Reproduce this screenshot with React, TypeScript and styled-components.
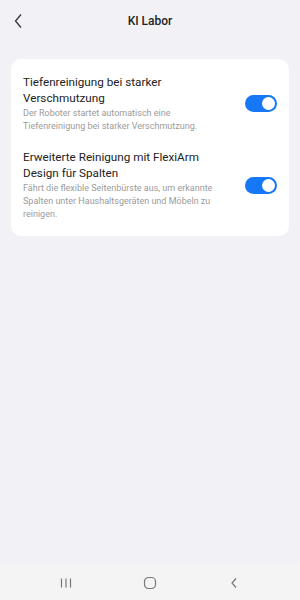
import React, { useState } from "react";
import styled, { createGlobalStyle } from "styled-components";

const Global = createGlobalStyle`
  html, body { margin: 0; padding: 0; }
  body {
    background: #f2f1f6;
    font-family: Roboto, "Noto Sans", "Liberation Sans", sans-serif;
    -webkit-font-smoothing: antialiased;
  }
`;

const Screen = styled.div`
  width: 300px;
  height: 600px;
  display: flex;
  flex-direction: column;
  background: #f2f1f6;
  overflow: hidden;
`;

const Header = styled.header`
  height: 42px;
  display: grid;
  grid-template-columns: 40px 1fr 40px;
  align-items: center;
`;

const BackButton = styled.button`
  border: none;
  background: none;
  padding: 0 0 0 13px;
  display: flex;
  align-items: center;
  height: 42px;
  cursor: pointer;
`;

const Title = styled.h1`
  margin: 0;
  text-align: center;
  font-size: 12px;
  font-weight: 500;
  color: #1f1f1f;
`;

const Content = styled.main`
  flex: 1;
  padding: 17px 11px 0;
`;

const Card = styled.section`
  background: #ffffff;
  border-radius: 10px;
  padding: 15px 12px 15px;
  display: flex;
  flex-direction: column;
  gap: 16px;
`;

const Row = styled.div`
  display: flex;
  align-items: center;
  gap: 20px;
`;

const TextCol = styled.div`
  flex: 1;
  min-width: 0;
`;

const RowTitle = styled.div`
  font-size: 11.7px;
  line-height: 16px;
  color: #222222;
`;

const RowDesc = styled.div`
  margin-top: 1px;
  font-size: 9px;
  line-height: 13px;
  color: #9b9b9b;
`;

const Track = styled.button<{ $on: boolean }>`
  flex: none;
  width: 32px;
  height: 17px;
  border-radius: 9px;
  border: none;
  padding: 0;
  background: ${(p) => (p.$on ? "#1677f7" : "#d6d6d6")};
  position: relative;
  cursor: pointer;
`;

const Knob = styled.span<{ $on: boolean }>`
  position: absolute;
  top: 2px;
  left: ${(p) => (p.$on ? "17px" : "2px")};
  width: 13px;
  height: 13px;
  border-radius: 50%;
  background: #ffffff;
`;

const NavBar = styled.nav`
  height: 35px;
  background: #f4f4f5;
  display: flex;
  align-items: center;
  justify-content: center;
  gap: 70px;
`;

const NavIcon = styled.span`
  width: 14px;
  display: flex;
  align-items: center;
  justify-content: center;
`;

function Toggle({ initial }: { initial: boolean }) {
  const [on, setOn] = useState(initial);
  return (
    <Track $on={on} onClick={() => setOn(!on)} aria-pressed={on}>
      <Knob $on={on} />
    </Track>
  );
}

const items = [
  {
    title: "Tiefenreinigung bei starker Verschmutzung",
    desc: "Der Roboter startet automatisch eine Tiefenreinigung bei starker Verschmutzung.",
  },
  {
    title: "Erweiterte Reinigung mit FlexiArm Design für Spalten",
    desc: "Fährt die flexible Seitenbürste aus, um erkannte Spalten unter Haushaltsgeräten und Möbeln zu reinigen.",
  },
];

export default function App() {
  return (
    <>
      <Global />
      <Screen>
        <Header>
          <BackButton aria-label="Zurück">
            <svg width="10" height="16" viewBox="0 0 10 16">
              <path d="M8 1.5 L2.5 8 L8 14.5" fill="none" stroke="#333" strokeWidth="1.3" />
            </svg>
          </BackButton>
          <Title>KI Labor</Title>
          <span />
        </Header>
        <Content>
          <Card>
            {items.map((it) => (
              <Row key={it.title}>
                <TextCol>
                  <RowTitle>{it.title}</RowTitle>
                  <RowDesc>{it.desc}</RowDesc>
                </TextCol>
                <Toggle initial={true} />
              </Row>
            ))}
          </Card>
        </Content>
        <NavBar>
          <NavIcon>
            <svg width="14" height="12" viewBox="0 0 14 12">
              <path d="M2.5 1.5V10.5M7 1.5V10.5M11.5 1.5V10.5" stroke="#777" strokeWidth="1.2" />
            </svg>
          </NavIcon>
          <NavIcon>
            <svg width="14" height="14" viewBox="0 0 14 14">
              <rect x="1.5" y="1.5" width="11" height="11" rx="4" fill="none" stroke="#777" strokeWidth="1.2" />
            </svg>
          </NavIcon>
          <NavIcon>
            <svg width="10" height="12" viewBox="0 0 10 12">
              <path d="M7 1.5 L3 6 L7 10.5" fill="none" stroke="#777" strokeWidth="1.2" />
            </svg>
          </NavIcon>
        </NavBar>
      </Screen>
    </>
  );
}
